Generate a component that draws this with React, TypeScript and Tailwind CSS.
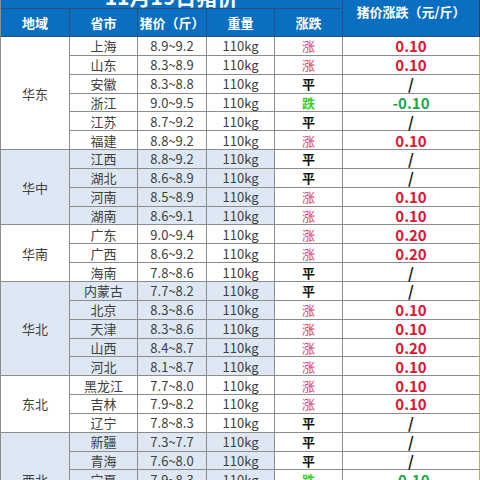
import React from 'react';

type Row = { city: string; price: string; trend: '涨' | '平' | '跌'; diff: string };
type Group = { region: string; shaded: boolean; rows: Row[] };

const groups: Group[] = [
  {
    region: '华东',
    shaded: false,
    rows: [
      { city: '上海', price: '8.9~9.2', trend: '涨', diff: '0.10' },
      { city: '山东', price: '8.3~8.9', trend: '涨', diff: '0.10' },
      { city: '安徽', price: '8.3~8.8', trend: '平', diff: '/' },
      { city: '浙江', price: '9.0~9.5', trend: '跌', diff: '-0.10' },
      { city: '江苏', price: '8.7~9.2', trend: '平', diff: '/' },
      { city: '福建', price: '8.8~9.2', trend: '涨', diff: '0.10' },
    ],
  },
  {
    region: '华中',
    shaded: true,
    rows: [
      { city: '江西', price: '8.8~9.2', trend: '平', diff: '/' },
      { city: '湖北', price: '8.6~8.9', trend: '平', diff: '/' },
      { city: '河南', price: '8.5~8.9', trend: '涨', diff: '0.10' },
      { city: '湖南', price: '8.6~9.1', trend: '涨', diff: '0.10' },
    ],
  },
  {
    region: '华南',
    shaded: false,
    rows: [
      { city: '广东', price: '9.0~9.4', trend: '涨', diff: '0.20' },
      { city: '广西', price: '8.6~9.2', trend: '涨', diff: '0.20' },
      { city: '海南', price: '7.8~8.6', trend: '平', diff: '/' },
    ],
  },
  {
    region: '华北',
    shaded: true,
    rows: [
      { city: '内蒙古', price: '7.7~8.2', trend: '平', diff: '/' },
      { city: '北京', price: '8.3~8.6', trend: '涨', diff: '0.10' },
      { city: '天津', price: '8.3~8.6', trend: '涨', diff: '0.10' },
      { city: '山西', price: '8.4~8.7', trend: '涨', diff: '0.20' },
      { city: '河北', price: '8.1~8.7', trend: '涨', diff: '0.10' },
    ],
  },
  {
    region: '东北',
    shaded: false,
    rows: [
      { city: '黑龙江', price: '7.7~8.0', trend: '涨', diff: '0.10' },
      { city: '吉林', price: '7.9~8.2', trend: '涨', diff: '0.10' },
      { city: '辽宁', price: '7.8~8.3', trend: '平', diff: '/' },
    ],
  },
  {
    region: '西北',
    shaded: true,
    rows: [
      { city: '新疆', price: '7.3~7.7', trend: '平', diff: '/' },
      { city: '青海', price: '7.6~8.0', trend: '平', diff: '/' },
      { city: '宁夏', price: '7.9~8.3', trend: '跌', diff: '-0.10' },
      { city: '甘肃', price: '7.6~8.1', trend: '平', diff: '/' },
      { city: '陕西', price: '7.9~8.4', trend: '平', diff: '/' },
    ],
  },
];

const cell = 'flex items-center justify-center leading-none border-r border-b border-[#8c8c8c]';
const head = 'flex items-center justify-center leading-none border-r border-b border-[#2b4f7a] bg-[#0b6fc1] text-white font-bold text-[13px]';

const trendColor = (t: Row['trend']) =>
  t === '涨' ? 'text-[#e8405a] font-normal' : t === '跌' ? 'text-[#3ccf2e] font-bold' : 'text-[#111] font-bold';

const diffColor = (t: Row['trend']) =>
  t === '涨' ? 'text-[#e2142e]' : t === '跌' ? 'text-[#22a54a]' : 'text-[#111]';

export default function App() {
  return (
    <div className="w-[480px] h-[480px] overflow-hidden bg-white" style={{ fontFamily: '"Noto Sans CJK SC", "Noto Sans", sans-serif' }}>
      <div className="-mt-[16px] grid grid-cols-[69px_68px_69px_68px_68px_138px] grid-rows-[25px_28px_repeat(29,18.85px)] border-l border-[#8c8c8c] text-[13px] text-[#404040]">
        <div className="col-span-5 flex items-center justify-center bg-[#0b6fc1] border-b border-r border-[#2b4f7a] text-white font-bold text-[21px] leading-none">
          11月19日猪价
        </div>
        <div className="row-span-2 flex items-center justify-center pt-[3px] leading-none bg-[#0b6fc1] border-b border-r-2 border-[#2b4f7a] border-r-[#5a2436] text-white font-bold text-[13px]">
          猪价涨跌（元/斤）
        </div>
        <div className={head}>地域</div>
        <div className={head}>省市</div>
        <div className={head}>猪价（斤）</div>
        <div className={head}>重量</div>
        <div className={head}>涨跌</div>

        {groups.map(g => {
          const bg = g.shaded ? 'bg-[#dde8f4]' : 'bg-white';
          return (
            <React.Fragment key={g.region}>
              <div
                className={`${cell} ${bg}`}
                style={{ gridRow: `span ${g.rows.length}` }}
              >
                {g.region}
              </div>
              {g.rows.map(r => (
                <React.Fragment key={r.city}>
                  <div className={`${cell} ${bg} col-start-2`}>{r.city}</div>
                  <div className={`${cell} ${bg}`}>{r.price}</div>
                  <div className={`${cell} ${bg}`}>110kg</div>
                  <div className={`${cell} bg-white ${trendColor(r.trend)}`}>{r.trend}</div>
                  <div className={`${cell} bg-white border-r-2 border-r-[#bfae62] font-bold text-[15px] ${diffColor(r.trend)}`}>
                    {r.diff}
                  </div>
                </React.Fragment>
              ))}
            </React.Fragment>
          );
        })}
      </div>
    </div>
  );
}
